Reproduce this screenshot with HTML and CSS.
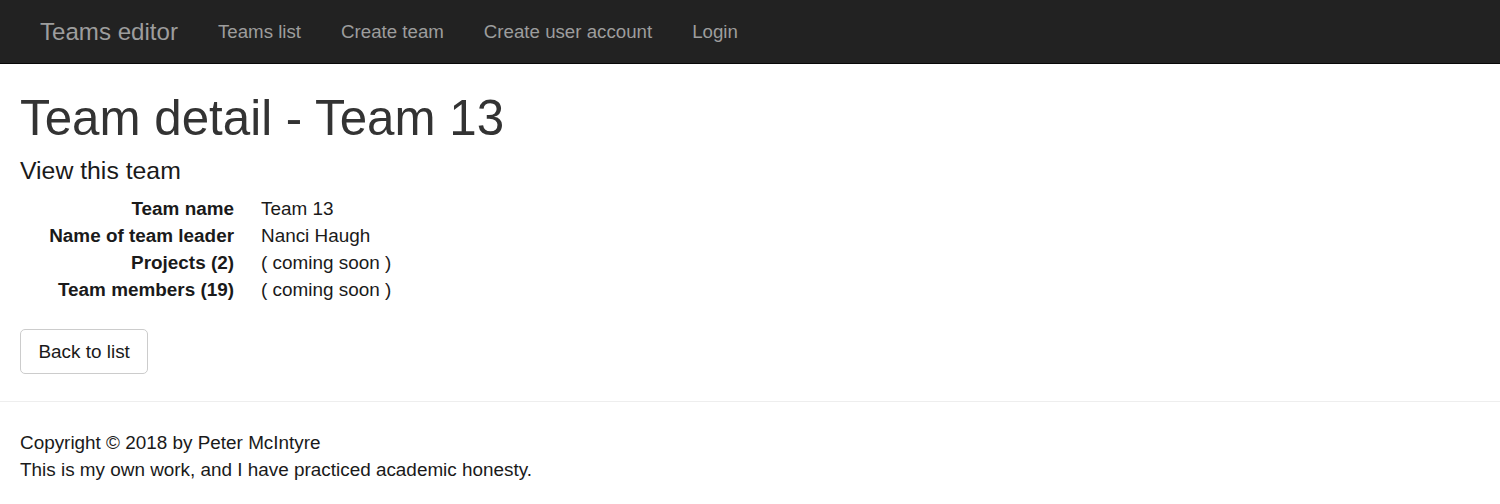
FILE: index.html
```html
<!DOCTYPE html>
<html lang="en">
<head>
<meta charset="utf-8">
<title>Team detail - Team 13</title>
<link rel="stylesheet" href="styles.css">
</head>
<body>
<nav class="navbar">
  <a class="brand" href="#">Teams editor</a>
  <ul class="nav">
    <li><a href="#">Teams list</a></li>
    <li><a href="#">Create team</a></li>
    <li><a href="#">Create user account</a></li>
    <li><a href="#">Login</a></li>
  </ul>
</nav>
<main class="container">
  <h1 class="title">Team detail - Team 13</h1>
  <h4 class="subtitle">View this team</h4>
  <dl class="details">
    <dt>Team name</dt>
    <dd>Team 13</dd>
    <dt>Name of team leader</dt>
    <dd>Nanci Haugh</dd>
    <dt>Projects (2)</dt>
    <dd>( coming soon )</dd>
    <dt>Team members (19)</dt>
    <dd>( coming soon )</dd>
  </dl>
  <div class="actions">
    <a class="btn" href="#">Back to list</a>
  </div>
  <hr class="rule">
  <footer class="footer">
    <p>Copyright © 2018 by Peter McIntyre</p>
    <p>This is my own work, and I have practiced academic honesty.</p>
  </footer>
</main>
</body>
</html>
```

FILE: styles.css
```css
* { box-sizing: border-box; }

html, body {
  margin: 0;
  padding: 0;
  background: #fff;
}

body {
  font-family: "Liberation Sans", Arial, Helvetica, sans-serif;
  font-size: 18.9px;
  line-height: 27px;
  color: #1a1a1a;
}

a { text-decoration: none; }

.navbar {
  display: flex;
  align-items: flex-start;
  height: 64px;
  background: #222;
  border-bottom: 1px solid #080808;
  padding: 0 20px;
}

.brand {
  display: block;
  padding: 18px 20px 0;
  font-size: 24.1px;
  line-height: 27px;
  color: #9d9d9d;
}

.nav {
  display: flex;
  list-style: none;
  margin: 0;
  padding: 0;
}

.nav a {
  display: block;
  padding: 18px 20px 0;
  font-size: 18.7px;
  line-height: 27px;
  color: #9d9d9d;
}

.container {
  padding: 0 20px;
}

.title {
  margin: 27px 0 13.5px;
  font-size: 49.3px;
  line-height: 53.5px;
  font-weight: 500;
  color: #333;
}

.subtitle {
  margin: 13.5px 0 10.5px;
  font-size: 24.8px;
  line-height: 26.7px;
  font-weight: 500;
  color: #1a1a1a;
}

.details {
  display: grid;
  grid-template-columns: 214px 1fr;
  column-gap: 27px;
  margin: 0 0 26px;
}

.details dt {
  font-weight: 700;
  text-align: right;
  white-space: nowrap;
}

.details dd {
  margin: 0;
}

.actions {
  display: flex;
}

.btn {
  display: inline-block;
  padding: 8px 17.5px;
  border: 1px solid #ccc;
  border-radius: 5px;
  background: #fff;
  color: #1a1a1a;
  font-size: 18.9px;
  line-height: 27px;
}

.rule {
  margin: 27px -20px;
  border: 0;
  border-top: 1px solid #eee;
}

.footer p {
  margin: 0;
}
```
